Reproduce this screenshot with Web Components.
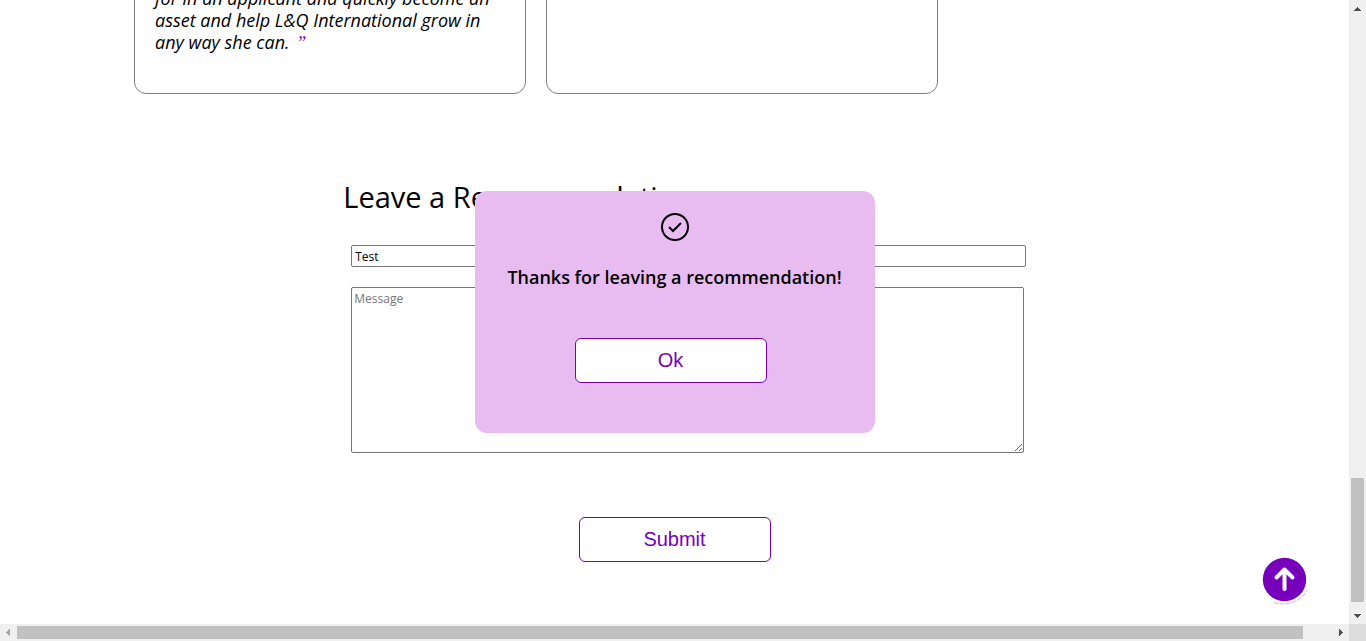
<!DOCTYPE html>
<html lang="en">
<head>
<meta charset="utf-8">
<title>Recommendations</title>
<style>
  html, body { margin: 0; height: 100%; overflow: hidden; }
  body { background: #fff; color: #000; font-family: "Trebuchet MS", "Open Sans", "Noto Sans", sans-serif; }
</style>
</head>
<body>
<app-viewport>
  <card-row>
    <quote-card>for in an applicant and quickly become an asset and help L&amp;Q International grow in any way she can.</quote-card>
    <quote-card empty></quote-card>
  </card-row>
  <recommendation-form></recommendation-form>
  <confirm-dialog slot="overlay">Thanks for leaving a recommendation!</confirm-dialog>
  <scroll-top slot="overlay"></scroll-top>
</app-viewport>
<script>
const define = (name, html) => customElements.define(name, class extends HTMLElement {
  constructor() {
    super();
    this.attachShadow({ mode: 'open' }).innerHTML = html;
  }
});

define('scroll-bar', `
<style>
  :host { display: flex; flex-direction: column; align-items: center; background: #f0f0f0; }
  :host([horizontal]) { flex-direction: row; }
  svg { flex: none; width: 17px; height: 17px; display: block; fill: #505050; shape-rendering: crispEdges; }
  .track { flex: 1; display: flex; flex-direction: column; align-items: center; width: 100%; }
  .before { flex: 461; }
  .thumb { flex: 124; width: 13px; background: #c1c1c1; }
  .after { flex: 5; }
  :host([horizontal]) .track { flex-direction: row; }
  :host([horizontal]) .before { flex: 0; }
  :host([horizontal]) .thumb { flex: 1286; height: 13px; width: auto; }
  :host([horizontal]) .after { flex: 29; }
  .h { display: none; }
  :host([horizontal]) .h { display: block; }
  :host([horizontal]) .v { display: none; }
  .off { fill: #a3a3a3; }
</style>
<svg class="v" viewBox="0 0 17 17"><path d="M8 7h1v1h1v1h1v1h1v1H5v-1h1V9h1V8h1z"/></svg>
<svg class="h off" viewBox="0 0 17 17"><path d="M10 5v7H9v-1H8v-1H7V9H6V8h1V7h1V6h1V5z"/></svg>
<div class="track"><div class="before"></div><div class="thumb"></div><div class="after"></div></div>
<svg class="v" viewBox="0 0 17 17"><path d="M5 7h7v1h-1v1h-1v1H9v1H8v-1H7V9H6V8H5z"/></svg>
<svg class="h" viewBox="0 0 17 17"><path d="M7 5v7h1v-1h1v-1h1V9h1V8h-1V7H9V6H8V5z"/></svg>`);

define('app-viewport', `
<style>
  :host { display: grid; grid-template: minmax(0, 1fr) 17px / minmax(0, 1fr) 17px; height: 100vh; }
  main { position: relative; overflow: hidden; }
  .corner { background: #dcdcdc; }
</style>
<main><slot></slot><slot name="overlay"></slot></main>
<scroll-bar></scroll-bar>
<scroll-bar horizontal></scroll-bar>
<div class="corner"></div>`);

define('card-row', `
<style>
  :host { display: grid; grid-template-columns: repeat(3, 392px); gap: 20px; align-content: end;
    height: 94px; padding-left: 134px; overflow: hidden; }
</style>
<slot></slot>`);

define('quote-card', `
<style>
  :host { display: flex; align-items: flex-end; box-sizing: border-box; min-height: 240px; padding: 20px 20px 40px;
    border: 1px solid #808080; border-radius: 12px; }
  p { margin: 0; font-size: 18px; line-height: 22px; font-style: italic; }
  span { color: #7600bc; font-family: "Liberation Serif", serif; font-size: 18px; line-height: 1; margin-left: 2px; }
  :host([empty]) p { display: none; }
</style>
<p><slot></slot> <span>”</span></p>`);

define('outline-button', `
<style>
  :host { display: block; width: 192px; }
  button { display: block; width: 100%; height: 45px; padding: 0 0 2px; border: 1px solid #7600bc; border-radius: 6px;
    background: #fff; color: #7600bc; font: 20px/24px "Liberation Sans", Arial, sans-serif; }
</style>
<button type="button"><slot></slot></button>`);

define('recommendation-form', `
<style>
  :host { display: block; width: 50%; margin: 0 auto; padding-top: 83px; }
  h2 { margin: 0 0 28px 6px; font-size: 29px; line-height: 40px; font-weight: 400; }
  form { display: flex; flex-direction: column; gap: 20px; }
  input, textarea { display: block; box-sizing: border-box; margin: 0 -14px 0 14px; border: 1px solid #767676;
    border-radius: 2px; background: #fff; color: #000; font-family: inherit; font-size: 12px; line-height: 16px; }
  input { height: 22px; padding: 0 3px; }
  textarea { height: 166px; padding: 3px 2px; margin-right: -12px; resize: both; }
  ::placeholder { color: #757575; opacity: 1; }
  outline-button { align-self: center; margin-top: 44px; }
</style>
<h2>Leave a Recommendation</h2>
<form>
  <input type="text" aria-label="Name" value="Test">
  <textarea aria-label="Message" placeholder="Message"></textarea>
  <outline-button>Submit</outline-button>
</form>`);

define('confirm-dialog', `
<style>
  :host { position: absolute; top: 50%; left: 50%; transform: translate(-50%, -50%); box-sizing: border-box;
    width: 400px; padding: 20px 0 50px; border-radius: 12px; background: #e8bcf0; }
  svg { display: block; width: 32px; height: 32px; margin: 0 auto; fill: none; stroke: #000; stroke-width: 2; }
  h3 { margin: 22px 0 48px; text-align: center; font-size: 18px; line-height: 25px; font-weight: 600; }
  outline-button { margin-left: 100px; }
</style>
<div role="dialog" aria-labelledby="t">
  <svg viewBox="0 0 32 32"><circle cx="16" cy="16" r="13"/><path d="M10 16l4 4 8-8"/></svg>
  <h3 id="t"><slot></slot></h3>
  <outline-button>Ok</outline-button>
</div>`);

define('scroll-top', `
<style>
  :host { position: absolute; right: 39px; bottom: 19px; }
  button { display: block; padding: 0; border: 0; background: none; }
  svg { display: block; width: 48px; height: 48px; }
</style>
<button type="button" aria-label="Back to top">
  <svg viewBox="0 0 48 48">
    <path d="M12 45.500Q24 49 34 44Q42 40 45.500 33" fill="none" stroke="#d9b3ee" stroke-width="1" stroke-dasharray="5 1"/>
    <circle cx="22.500" cy="22.500" r="21.700" fill="#7600bc"/>
    <path d="M22.500 32V13M14.500 20.500l8-8 8 8" fill="none" stroke="#fff" stroke-width="4" stroke-linecap="round" stroke-linejoin="round"/>
  </svg>
</button>`);
</script>
</body>
</html>
